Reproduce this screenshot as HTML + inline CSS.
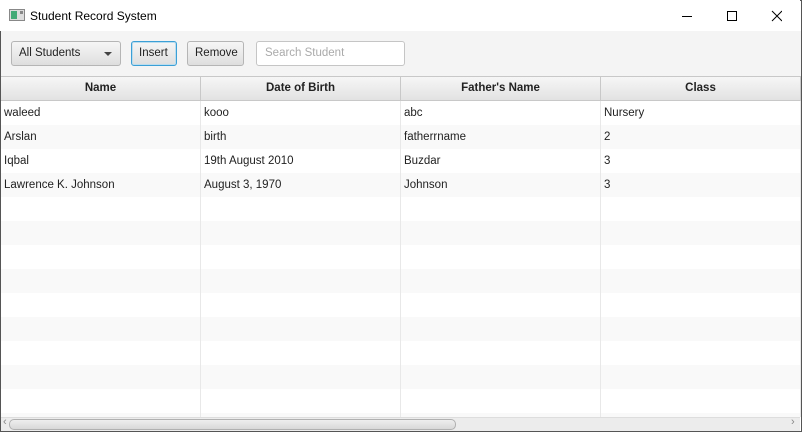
<!DOCTYPE html><html><head><style>
*{margin:0;padding:0;box-sizing:border-box}
body{width:802px;height:432px;overflow:hidden;background:#fff;font-family:"Liberation Sans",sans-serif;font-size:11.5px;color:#222;position:relative}
.win{position:absolute;left:0;top:0;width:802px;height:432px;border:1px solid #555}
.title{position:absolute;left:0;top:0;width:800px;height:31px;background:#fff}
.title span{position:absolute;left:30px;top:9px;font-size:12px;color:#000}
.tb{position:absolute;left:1px;top:31px;width:800px;height:45px;background:#f4f4f4}
.btn{position:absolute;top:10px;height:25px;border:1px solid #b5b5b5;border-radius:3px;background:linear-gradient(#f6f6f6,#dedede);line-height:23px;padding-left:7px}
.grid{position:absolute;left:1px;top:76px;width:800px;height:341px;overflow:hidden}
.hdr{height:25px;background:linear-gradient(#f6f6f6,#e2e2e2);border-bottom:1px solid #c8c8c8;border-top:1px solid #c8c8c8;display:flex}
.hdr div{flex:none;width:200px;border-right:1px solid #c8c8c8;text-align:center;font-weight:bold;line-height:23px}
.row{height:24px;display:flex}
.row div{flex:none;width:200px;border-right:1px solid #e8e8e8;padding-left:3px;line-height:24px;white-space:nowrap}
.sb{position:absolute;left:1px;top:417px;width:799px;height:14px;background:#ececec;border-top:1px solid #ddd}
</style></head><body><div class="win"></div>
<div class="title"><svg style="position:absolute;left:9px;top:9px" width="16" height="12"><rect x=".5" y=".5" width="15" height="11" fill="#ddd" stroke="#888"/><rect x="2" y="2" width="6" height="8" fill="#4a7"/><rect x="11" y="2" width="3" height="3" fill="#888"/></svg><span>Student Record System</span>
<svg style="position:absolute;left:682px;top:10px" width="100" height="12"><line x1="0" y1="6.5" x2="10" y2="6.5" stroke="#000"/><rect x="45.5" y="1.5" width="9" height="9" fill="none" stroke="#000"/><path d="M90 1L100 11M100 1L90 11" stroke="#000"/></svg></div>
<div class="tb">
<div class="btn" style="left:10px;width:110px">All Students<span style="position:absolute;left:92px;top:10px;border:4px solid transparent;border-top:4px solid #444;border-bottom:0"></span></div>
<div class="btn" style="left:130px;width:46px;border-color:#3b9fd6;box-shadow:inset 0 0 0 1px #bde">Insert</div>
<div class="btn" style="left:186px;width:57px">Remove</div>
<div style="position:absolute;left:255px;top:10px;width:149px;height:25px;border:1px solid #c5c5c5;border-radius:3px;background:#fff;color:#aaa;padding-left:8px;line-height:23px">Search Student</div>
</div>
<div class="grid">
<div class="hdr"><div>Name</div><div>Date of Birth</div><div>Father's Name</div><div>Class</div></div>
<div>
<div class="row" style="background:#fff"><div>waleed</div><div>kooo</div><div>abc</div><div>Nursery</div></div>
<div class="row" style="background:#f9f9f9"><div>Arslan</div><div>birth</div><div>fatherrname</div><div>2</div></div>
<div class="row" style="background:#fff"><div>Iqbal</div><div>19th August 2010</div><div>Buzdar</div><div>3</div></div>
<div class="row" style="background:#f9f9f9"><div>Lawrence K. Johnson</div><div>August 3, 1970</div><div>Johnson</div><div>3</div></div>
<div class="row" style="background:#fff"><div></div><div></div><div></div><div></div></div>
<div class="row" style="background:#f9f9f9"><div></div><div></div><div></div><div></div></div>
<div class="row" style="background:#fff"><div></div><div></div><div></div><div></div></div>
<div class="row" style="background:#f9f9f9"><div></div><div></div><div></div><div></div></div>
<div class="row" style="background:#fff"><div></div><div></div><div></div><div></div></div>
<div class="row" style="background:#f9f9f9"><div></div><div></div><div></div><div></div></div>
<div class="row" style="background:#fff"><div></div><div></div><div></div><div></div></div>
<div class="row" style="background:#f9f9f9"><div></div><div></div><div></div><div></div></div>
<div class="row" style="background:#fff"><div></div><div></div><div></div><div></div></div>
<div class="row" style="background:#f9f9f9"><div></div><div></div><div></div><div></div></div>
</div></div>
<div class="sb"><div style="position:absolute;left:8px;top:1px;width:287px;height:11px;border:1px solid #b0b0b0;border-radius:5px;background:linear-gradient(#eee,#d8d8d8);width:447px"></div>
<span style="position:absolute;left:2px;top:-2px;color:#888;font-size:11px">‹</span><span style="position:absolute;left:790px;top:-2px;color:#888;font-size:11px">›</span></div>
</body></html>
